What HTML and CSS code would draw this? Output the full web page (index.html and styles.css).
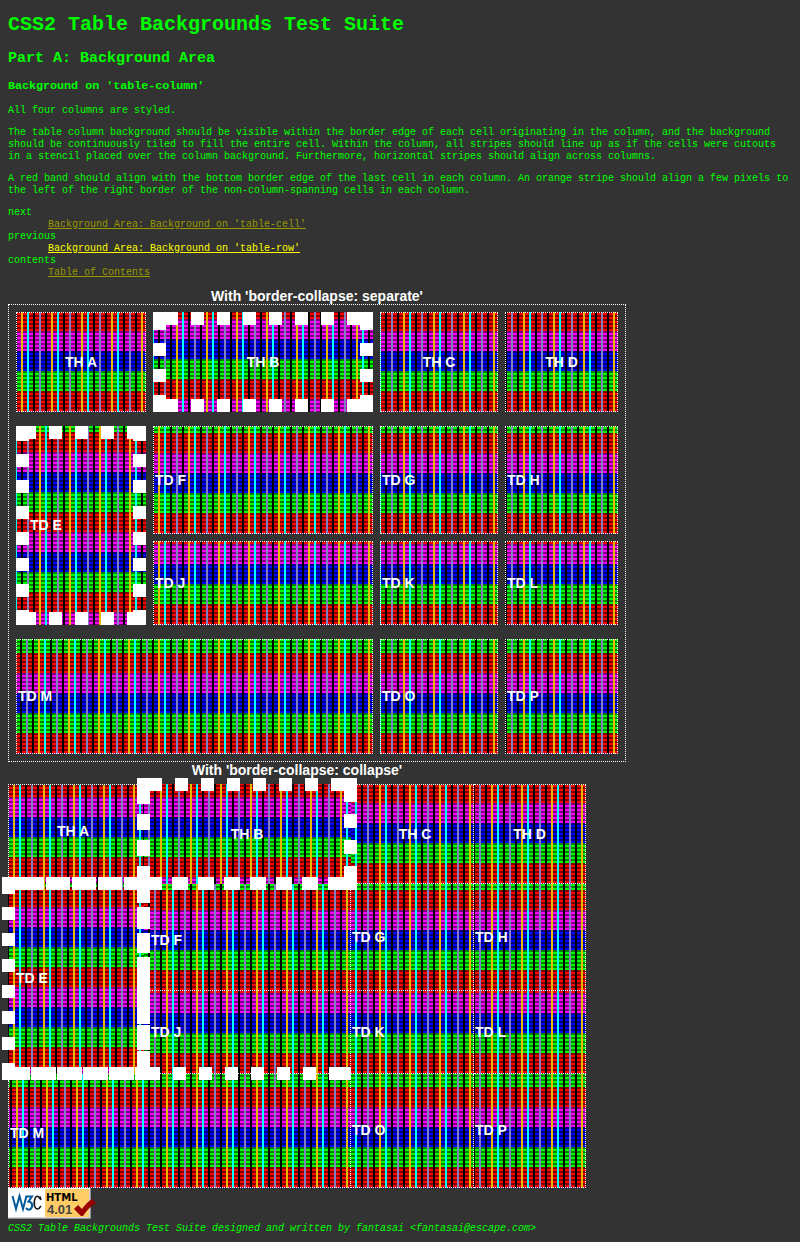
FILE: index.html
```html
<!DOCTYPE html>
<html lang="en">
<head>
<meta charset="utf-8">
<title>CSS2 Table Backgrounds Test Suite</title>
<link rel="stylesheet" href="styles.css">
</head>
<body>
<h1>CSS2 Table Backgrounds Test Suite</h1>
<h2>Part A: Background Area</h2>
<h3>Background on 'table-column'</h3>
<p>All four columns are styled.</p>
<p>The table column background should be visible within the border edge of each cell originating in the column, and the background should be continuously tiled to fill the entire cell. Within the column, all stripes should line up as if the cells were cutouts in a stencil placed over the column background. Furthermore, horizontal stripes should align across columns.</p>
<p>A red band should align with the bottom border edge of the last cell in each column. An orange stripe should align a few pixels to the left of the right border of the non-column-spanning cells in each column.</p>
<dl>
<dt>next</dt>
<dd><a class="seen" href="#next">Background Area: Background on 'table-cell'</a></dd>
<dt>previous</dt>
<dd><a href="#previous">Background Area: Background on 'table-row'</a></dd>
<dt>contents</dt>
<dd><a class="seen" href="#contents">Table of Contents</a></dd>
</dl>

<table class="separate">
<caption>With 'border-collapse: separate'</caption>
<colgroup><col class="c1"><col class="c2"><col class="c3"><col class="c4"></colgroup>
<thead>
<tr class="r1"><th>TH A</th><th class="dash dash-b">TH B</th><th>TH C</th><th>TH D</th></tr>
<tr></tr>
</thead>
<tbody>
<tr class="r2"><td rowspan="2" class="dash dash-e">TD E</td><td>TD F</td><td>TD G</td><td>TD H</td></tr>
<tr class="r3"><td>TD J</td><td>TD K</td><td>TD L</td></tr>
<tr></tr>
</tbody>
<tbody>
<tr class="r4"><td colspan="2">TD M</td><td>TD O</td><td>TD P</td></tr>
</tbody>
</table>

<table class="collapse">
<caption>With 'border-collapse: collapse'</caption>
<colgroup><col class="c1"><col class="c2"><col class="c3"><col class="c4"></colgroup>
<thead>
<tr class="r1"><th class="beside">TH A</th><th class="dash dash-b">TH B</th><th>TH C</th><th>TH D</th></tr>
</thead>
<tbody>
<tr class="r2"><td rowspan="2" class="dash dash-e">TD E</td><td>TD F</td><td>TD G</td><td>TD H</td></tr>
<tr class="r3"><td>TD J</td><td>TD K</td><td>TD L</td></tr>
</tbody>
<tbody>
<tr class="r4"><td colspan="2">TD M</td><td>TD O</td><td>TD P</td></tr>
</tbody>
</table>

<a class="badge" href="#validator" aria-label="Valid HTML 4.01">
<svg width="90" height="31" viewBox="0 0 90 31">
<rect width="83" height="31" fill="#808080"/>
<rect width="82" height="30" fill="#fff"/>
<rect x="37" y="1" width="44" height="28" fill="#fc6"/>
<path d="M82 1V30H1" fill="none" stroke="#a8a8a8"/>
<path d="M4.5 8 8 21 11.5 8 15 21 18.500 8" fill="none" stroke="#005a9c" stroke-width="2"/>
<path d="M17.500 8.500H24L20.500 13.500Q25 14 24 19Q21.500 24 18 20" fill="none" stroke="#005a9c" stroke-width="2"/>
<path d="M33 12 32 8.500 32 11Q30 6.500 27.500 9.500Q25.500 13 26.500 18Q29 24 33 18" fill="none" stroke="#111" stroke-width="1.500"/>
<text class="lang" x="38" y="13">HTML</text>
<text class="version" x="39" y="26">4.01</text>
<path d="M66 21 70 17 74 21Q79 14 84 11L88 15Q81 19 75 28H73Z" fill="#900"/>
</svg>
</a>
<address>CSS2 Table Backgrounds Test Suite designed and written by fantasai &lt;fantasai@escape.com&gt;</address>
</body>
</html>
```
FILE: styles.css
```css
body {
  margin: 0;
  padding: 0 8px 8px;
  background: #333;
  color: #0f0;
  font-family: "Liberation Mono", monospace;
  font-size: 10px;
  line-height: 12px;
}
h1 { margin: 13px 0 14px; font-size: 20px; line-height: 23px; }
h2 { margin: 13px 0; font-size: 15px; line-height: 17px; }
h3 { margin: 13px 0 12px; line-height: 13px; }
dl { margin-bottom: 9px; }
a { color: #ff0; }
a.seen { color: #990; }

table {
  color: #fff;
  font: bold 14px/16px "Liberation Sans", Arial, sans-serif;
}
.separate { border: 1px dotted #fff; border-spacing: 7px; }
.collapse { margin-left: -6px; border-collapse: collapse; }
.collapse caption { padding-left: 6px; }

th, td {
  --s: 1px;
  box-sizing: border-box;
  padding: 1px;
  border: 1px dotted #fff;
}
.r4 td, .dash-e { padding-bottom: 2px; }

/* Vertical stripes over four shaded colour bands, counted from the
   inner corner at the lower right; --s is the border width beyond it. */
th, td, .collapse .dash::before {
  background-origin: border-box;
  background-image:
    repeating-linear-gradient(to left,
      transparent var(--s) calc(var(--s) + 2px),
      #e6b800 calc(var(--s) + 2px) calc(var(--s) + 4px),
      transparent calc(var(--s) + 4px) calc(var(--s) + 8px),
      #000 calc(var(--s) + 8px) calc(var(--s) + 10px),
      transparent calc(var(--s) + 10px) calc(var(--s) + 14px),
      #8080c0 calc(var(--s) + 14px) calc(var(--s) + 16px),
      transparent calc(var(--s) + 16px) calc(var(--s) + 20px),
      #000 calc(var(--s) + 20px) calc(var(--s) + 22px),
      transparent calc(var(--s) + 22px) calc(var(--s) + 26px),
      #0ff calc(var(--s) + 26px) calc(var(--s) + 28px),
      transparent calc(var(--s) + 28px) calc(var(--s) + 30px)),
    repeating-linear-gradient(to top,
      transparent var(--s) calc(var(--s) + 2px),
      rgba(0, 0, 0, 0.5) calc(var(--s) + 2px) calc(var(--s) + 4px)),
    repeating-linear-gradient(to top,
      #f00 var(--s) calc(var(--s) + 20px),
      #0f0 calc(var(--s) + 20px) calc(var(--s) + 40px),
      #00f calc(var(--s) + 40px) calc(var(--s) + 60px),
      #f0f calc(var(--s) + 60px) calc(var(--s) + 80px));
}
.dash { --s: 13px; position: relative; z-index: 0; border: 13px dashed transparent; }
.collapse .dash, .collapse .beside { --s: 7px; }
.collapse .dash::before {
  content: "";
  position: absolute;
  z-index: -1;
  inset: -7px;
}

/* Dashed frames: square corners, then an evenly spaced run on each side */
.dash::after {
  content: "";
  position: absolute;
  inset: -13px;
  background-repeat: no-repeat, no-repeat, no-repeat, no-repeat, repeat-x, repeat-x, repeat-y, repeat-y;
  background-image:
    linear-gradient(#fff, #fff), linear-gradient(#fff, #fff),
    linear-gradient(#fff, #fff), linear-gradient(#fff, #fff),
    linear-gradient(to right, #fff 13px, transparent 13px),
    linear-gradient(to right, #fff 13px, transparent 13px),
    linear-gradient(#fff 13px, transparent 13px),
    linear-gradient(#fff 13px, transparent 13px);
  background-size: 13px 13px, 13px 13px, 13px 13px, 13px 13px, 26px 13px, 26px 13px, 13px 26px, 13px 26px;
  background-position:
    left top, right top, left bottom, right bottom,
    var(--x) top, var(--x) bottom, left var(--y), right var(--y);
}
.dash-b { --x: 12px; --y: 5px; }
.dash-e { --x: 7px; --y: 2px; }

.collapse .dash-b::after {
  background-image:
    linear-gradient(#fff, #fff), linear-gradient(#fff, #fff),
    linear-gradient(#fff, #fff), linear-gradient(#fff, #fff),
    linear-gradient(to right, #fff 13px, transparent 13px),
    linear-gradient(to right, #fff 16px, transparent 16px),
    linear-gradient(#fff 16px, transparent 16px),
    linear-gradient(#fff 14px, transparent 14px);
  background-position:
    left top, right top, left bottom, right bottom,
    12px top, 9px bottom, left 10px, right 10px;
}

/* The lower run carries on past this cell, over the two-column cell below */
.collapse .dash-e::after {
  right: -214px;
  background:
    linear-gradient(#fff, #fff) left top / 20px 13px no-repeat,
    linear-gradient(#fff, #fff) left bottom / 17px 13px no-repeat,
    linear-gradient(#fff, #fff) right bottom / 13px 13px no-repeat,
    linear-gradient(#fff 26px, transparent 26px 30px, #fff 30px 52px, transparent 52px 56px,
      #fff 56px 76px, transparent 76px 80px, #fff 80px 147px, transparent 147px 148px,
      #fff 148px 173px, transparent 173px 174px, #fff 174px) 135px 0 / 13px 100% no-repeat,
    repeating-linear-gradient(to right, #fff 0 16px, transparent 16px 18px, #fff 18px 26px)
      left top / 148px 13px no-repeat,
    repeating-linear-gradient(to right, transparent 0 3px, #fff 3px 15px, transparent 15px 26px)
      left bottom / 148px 13px no-repeat,
    linear-gradient(to right, #fff 13px, transparent 13px) 15px bottom / 26px 13px repeat-x,
    linear-gradient(#fff 13px, transparent 13px) left 4px / 13px 26px repeat-y;
}

.separate .c1 { width: 130px; }
.separate .c2 { width: 220px; }
.separate .c3 { width: 118px; }
.separate .c4 { width: 113px; }
.separate .r1 { height: 100px; }
.separate .r2 { height: 108px; }
.separate .r3 { height: 84px; }
.separate .r4 { height: 115px; }

.collapse .c1 { width: 135px; }
.collapse .c2 { width: 207px; }
.collapse .c3 { width: 123px; }
.collapse .c4 { width: 112px; }
.collapse .r1 { height: 99px; }
.collapse .r2 { height: 107px; }
.collapse .r3 { height: 83px; }
.collapse .r4 { height: 114px; }

.badge { display: block; }
.badge svg { display: block; }
.lang { font: bold 10px "DejaVu Sans", sans-serif; fill: #000; }
.version { font: bold 13px "Liberation Sans", sans-serif; fill: #444; }
address { line-height: 20px; }
```
